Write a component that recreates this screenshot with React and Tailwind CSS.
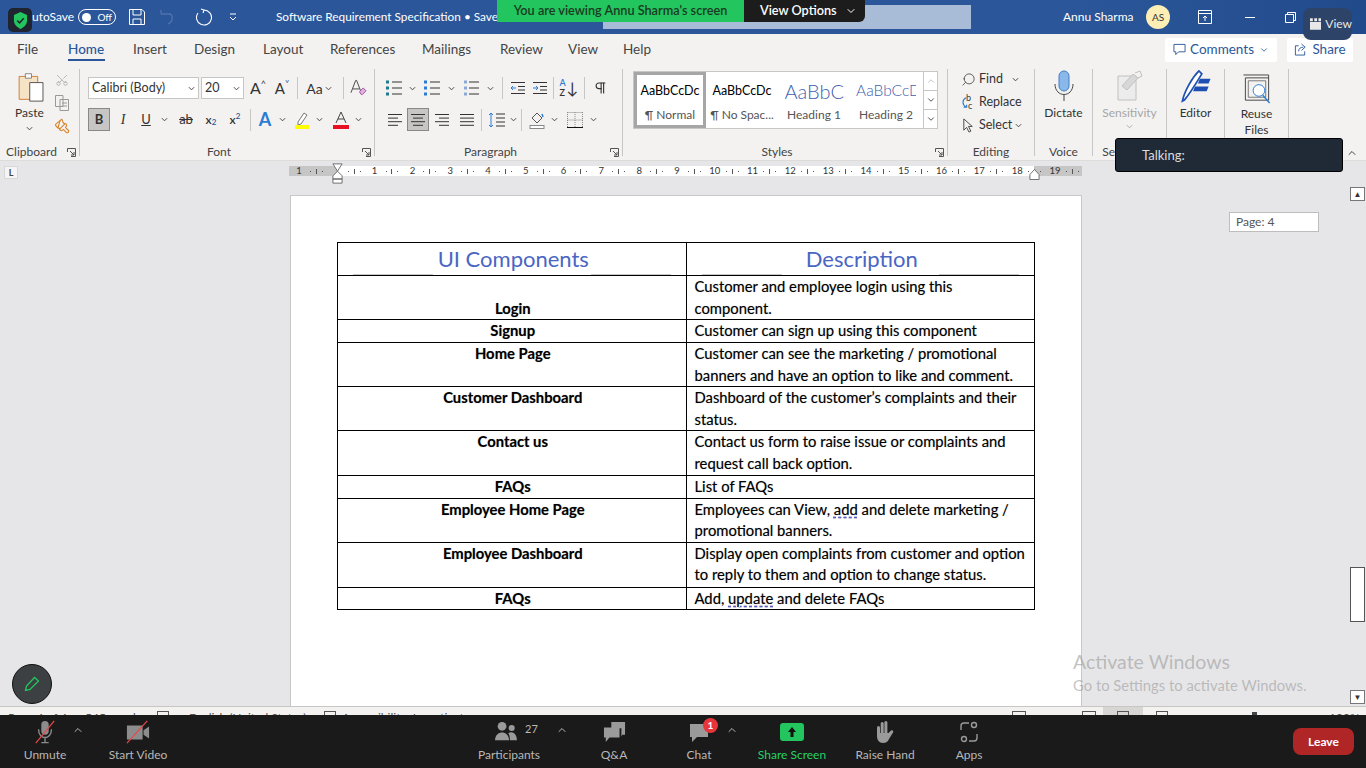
import React from "react";
import { ChevronDown, ChevronUp, Search, Pilcrow, Scissors, Paintbrush } from "lucide-react";

const Caret = ({ className = "" }) => (
  <svg viewBox="0 0 8 5" className={`w-[7px] h-[5px] ${className}`} fill="none" stroke="#444" strokeWidth="1.1">
    <path d="M1 1l3 3 3-3" />
  </svg>
);

const Divider = ({ className = "" }) => <span className={`block w-px h-[22px] bg-[#c8c6c4] ${className}`} />;

const Launcher = () => (
  <svg viewBox="0 0 9 9" className="w-[9px] h-[9px]" fill="none" stroke="#555" strokeWidth="1">
    <path d="M.5 4V.5H8.500V8.500H4M3 3l4 4M7 4v3H4" />
  </svg>
);

const Group = ({ width, label, launcher, children }) => (
  <div className={`flex flex-col shrink-0 h-[87px] border-r border-[#c8c6c4] ${width}`}>
    <div className="flex-1 min-h-0">{children}</div>
    <div className={`relative h-[16px] text-center text-[12px] leading-[24px] text-[#444] whitespace-nowrap ${launcher ? "pr-[16px]" : ""}`}>
      {label}
      {launcher && <span className="absolute right-[3px] top-[8px]"><Launcher /></span>}
    </div>
  </div>
);

const Cell = ({ width, className = "", children }) => (
  <span className={`flex items-center justify-center shrink-0 h-[22px] ${width} ${className}`}>{children}</span>
);

const Lines = ({ rows }) => (
  <svg viewBox="0 0 16 14" className="w-[16px] h-[14px]" stroke="#333" strokeWidth="1" fill="none">
    {rows.map((r, i) => (
      <path key={i} d={`M${r[0]} ${1.5 + i * 3.6}H${r[1]}`} />
    ))}
  </svg>
);

const ListIcon = ({ color = "#1f7a8c", subtle }) => (
  <svg viewBox="0 0 18 16" className="w-[18px] h-[16px]" fill="none">
    {[2, 8, 14].map((y) => (
      <g key={y}>
        <rect x={subtle ? 2 : 1} y={y - 1.500} width="3" height="3" fill={color} />
        <path d={`M7 ${y}H17`} stroke="#333" />
      </g>
    ))}
  </svg>
);

const IndentIcon = ({ flip }) => (
  <svg viewBox="0 0 16 14" className="w-[16px] h-[14px]" fill="none" stroke="#333">
    <path d="M1 1.500H15M8 5.500H15M8 9H15M1 12.500H15" />
    <path d={flip ? "M6 7H1M3 5L1 7l2 2" : "M1 7H6M4 5l2 2-2 2"} stroke="#2b7cd3" />
  </svg>
);

const TAB_ITEMS = [
  ["File", "w-[51px]"],
  ["Home", "w-[65px]"],
  ["Insert", "w-[61px]"],
  ["Design", "w-[69px]"],
  ["Layout", "w-[67px]"],
  ["References", "w-[92px]"],
  ["Mailings", "w-[78px]"],
  ["Review", "w-[68px]"],
  ["View", "w-[55px]"],
  ["Help", "w-[40px]"],
];

const STYLES = [
  ["AaBbCcDc", "¶ Normal", "text-[12.500px] text-black", "w-[72px] border-[3px] border-[#a6a6a6]"],
  ["AaBbCcDc", "¶ No Spac...", "text-[12.500px] text-black", "w-[72px] pt-[3px]"],
  ["AaBbCc", "Heading 1", "w-[59px] overflow-hidden text-[20px] font-light text-[#3f5fae]", "w-[72px] pt-[3px]"],
  ["AaBbCcD", "Heading 2", "w-[60px] overflow-hidden text-[15.500px] font-light text-[#3f5fae]", "w-[72px] pt-[3px]"],
];

const ROWS = [
  ["Login", <>Customer and employee login using this<br />component.</>, "h-[44px]", "align-bottom"],
  ["Signup", "Customer can sign up using this component", "h-[23px]", "align-top"],
  ["Home Page", <>Customer can see the marketing / promotional<br />banners and have an option to like and comment.</>, "h-[44px]", "align-top"],
  ["Customer Dashboard", <>Dashboard of the customer’s complaints and their<br />status.</>, "h-[44px]", "align-top"],
  ["Contact us", <>Contact us form to raise issue or complaints and<br />request call back option.</>, "h-[45px]", "align-top"],
  ["FAQs", "List of FAQs", "h-[22px]", "align-top"],
  ["Employee Home Page", <>Employees can View, <span className="underline decoration-dashed decoration-[#5a5ac8] underline-offset-2">add</span> and delete marketing /<br />promotional banners.</>, "h-[44px]", "align-top"],
  ["Employee Dashboard", <>Display open complaints from customer and option<br />to reply to them and option to change status.</>, "h-[45px]", "align-top"],
  ["FAQs", <>Add, <span className="underline decoration-dashed decoration-[#5a5ac8] underline-offset-2">update</span> and delete FAQs</>, "h-[22px]", "align-top"],
];

const RULER = [-1, 0, 1, 2, 3, 4, 5, 6, 7, 8, 9, 10, 11, 12, 13, 14, 15, 16, 17, 18, 19];

const TitleBar = () => (
  <div className="flex items-center h-[34px] bg-[linear-gradient(90deg,#2b579a_78%,#214a8b_100%)] text-white text-[12px] shrink-0">
    <span className="ml-[32px] w-[46px]">utoSave</span>
    <span className="flex items-center justify-between w-[38px] h-[16px] rounded-full border border-white px-[3px] text-[10px]">
      <span className="w-[9px] h-[9px] rounded-full bg-white" />Off
    </span>
    <svg viewBox="0 0 16 16" className="ml-[13px] w-[16px] h-[16px]" fill="none" stroke="#fff">
      <path d="M.5.500H13L15.500 3V15.500H.5ZM4 .5V6H12V.5M4 15.500V10H12V15.500" />
    </svg>
    <svg viewBox="0 0 18 16" className="ml-[14px] w-[18px] h-[16px]" fill="none" stroke="#4f74ad" strokeWidth="1.300">
      <path d="M2 5H10C14 5 15 12 9 15M2 1v4" />
    </svg>
    <svg viewBox="0 0 18 18" className="ml-[17px] w-[18px] h-[18px]" fill="none" stroke="#fff" strokeWidth="1.100">
      <path d="M10 2A7.500 7.500 0 1 1 4 5M7 1l3 1-1 3" />
    </svg>
    <svg viewBox="0 0 8 8" className="ml-[17px] w-[8px] h-[8px]" fill="none" stroke="#fff">
      <path d="M1 1H7M1 4l3 3 3-3" />
    </svg>
    <span className="ml-[39px] w-[220px] whitespace-nowrap text-[11.800px]">Software Requirement Specification • Saved</span>
    <span className="ml-[107px] w-[368px] h-[24px] bg-[#a8bcd8]" />
    <span className="ml-[92px] w-[72px] whitespace-nowrap">Annu Sharma</span>
    <span className="ml-[11px] flex items-center justify-center w-[24px] h-[24px] rounded-full bg-[#fdeeb5] text-[#333] text-[10px]">AS</span>
    <svg viewBox="0 0 14 14" className="ml-[28px] w-[14px] h-[14px]" fill="none" stroke="#fff">
      <path d="M.5.500H13.500V13.500H.5ZM.5 3.500H13.500M7 11V6M5 8l2-2 2 2" />
    </svg>
    <span className="ml-[33px] w-[10px] h-px bg-white" />
    <svg viewBox="0 0 11 11" className="ml-[30px] w-[11px] h-[11px]" fill="none" stroke="#fff">
      <path d="M.5 2.500H8.500V10.500H.5ZM2.500 2.500V.5H10.500V8.500H8.500" />
    </svg>
  </div>
);

const Tabs = () => (
  <div className="flex items-center h-[33px] pl-[17px] pb-[2px] bg-[#f3f2f1] text-[13.500px] text-[#444] shrink-0">
    {TAB_ITEMS.map(([name, width]) => (
      <span key={name} className={`relative shrink-0 ${width} ${name === "Home" ? "text-[#2b579a] font-medium" : ""}`}>
        {name}
        {name === "Home" && <span className="absolute left-0 top-[20px] w-[37px] h-[2px] bg-[#2b579a]" />}
      </span>
    ))}
    <span className="ml-auto flex items-center w-[112px] h-[24px] bg-white rounded-[2px] text-[13.500px] text-[#2b579a] pl-[8px]">
      <svg viewBox="0 0 14 14" className="w-[13px] h-[13px] mr-[4px]" fill="none" stroke="#2b579a">
        <path d="M1 1.500H13V9.500H6L3 12.500V9.500H1Z" />
      </svg>
      Comments
      <ChevronDown className="ml-[5px] w-[10px] h-[10px]" />
    </span>
    <span className="ml-[10px] mr-[13px] flex items-center justify-center gap-[5px] w-[66px] h-[24px] bg-white rounded-[2px] text-[13.500px] text-[#2b579a]">
      <svg viewBox="0 0 14 14" className="w-[13px] h-[13px]" fill="none" stroke="#2b579a">
        <path d="M5 3H1.500V13H11.500V9M5 9C5 6 7 4.500 10 4.500M8 1l4 3.500L8 8" />
      </svg>
      Share
    </span>
  </div>
);

const Ribbon = () => (
  <div className="flex h-[94px] pt-[2px] bg-[#f3f2f1] border-b border-[#dddcda] text-[#333] shrink-0">
    <Group width="w-[80px]" label="Clipboard" launcher>
      <div className="flex">
        <div className="flex flex-col items-center w-[47px] pl-[12px]">
          <svg viewBox="0 0 30 34" className="mt-[3px] ml-[3px] w-[27px] h-[30px]" fill="none">
            <path d="M1 5H22V31H1Z" fill="#f6e3c5" stroke="#c8742b" />
            <path d="M8 2H15V7H8Z" fill="#fff" stroke="#777" />
            <path d="M13 12H28V33H13Z" fill="#fff" stroke="#444" />
          </svg>
          <span className="text-[12px] leading-[14px] mt-[4px]">Paste</span>
          <Caret className="mt-[6px]" />
        </div>
        <div className="flex flex-col items-center gap-[7px] w-[26px] pt-[3px] pl-[4px]">
          <Scissors className="w-[14px] h-[16px] text-[#a6a6a6] -rotate-90" strokeWidth={1.300} />
          <svg viewBox="0 0 14 16" className="w-[14px] h-[16px]" fill="none" stroke="#999">
            <path d="M.5.500H8V11.500H.5ZM5 4.500H13.500V15.500H5ZM7 8H12M7 11H12" />
          </svg>
          <Paintbrush className="w-[16px] h-[16px] text-[#d9822b] rotate-90" strokeWidth={1.600} />
        </div>
      </div>
    </Group>

    <Group width="w-[295px]" label="Font" launcher>
      <div className="flex items-center h-[22px] mt-[8px] pl-[8px]">
        <span className="flex items-center justify-between w-[111px] h-[22px] bg-white border border-[#c8c6c4] px-[3px] text-[12.500px]">
          Calibri (Body)<Caret />
        </span>
        <span className="ml-[2px] flex items-center justify-between w-[43px] h-[22px] bg-white border border-[#c8c6c4] px-[3px] text-[12.500px]">
          20<Caret />
        </span>
        <Cell width="w-[24px] ml-[2px]" className="text-[16px]">A<sup className="text-[9px]">^</sup></Cell>
        <Cell width="w-[24px]" className="text-[15px]">A<sup className="text-[9px] text-[#2b579a]">˅</sup></Cell>
        <Divider className="ml-[3px]" />
        <Cell width="w-[38px] ml-[2px]" className="gap-[2px] text-[14px]">Aa<Caret /></Cell>
        <Divider className="ml-[5px]" />
        <Cell width="w-[28px]">
          <svg viewBox="0 0 18 18" className="w-[17px] h-[18px]" fill="none">
            <path d="M1 14L6 1h1l5 13M3 10h7" stroke="#444" />
            <path d="M10 13l4-4 3 3-4 4h-1Z" fill="#e2b3e0" stroke="#a24aa0" />
          </svg>
        </Cell>
      </div>
      <div className="flex items-center h-[23px] mt-[9px] pl-[8px]">
        <span className="flex items-center justify-center w-[22px] h-[23px] bg-[#c8c6c4] border border-[#8a8886] text-[13px] font-bold">B</span>
        <Cell width="w-[22px] ml-[2px]" className="italic text-[14px] font-['Liberation_Serif',serif]">I</Cell>
        <Cell width="w-[24px]" className="underline text-[13px]">U</Cell>
        <Cell width="w-[12px]"><Caret /></Cell>
        <Cell width="w-[24px] ml-[4px]" className="line-through text-[13px]">ab</Cell>
        <Cell width="w-[24px] ml-[1px]" className="text-[12px] font-semibold">x<sub className="text-[8px] text-[#2b579a]">2</sub></Cell>
        <Cell width="w-[24px]" className="text-[12px] font-semibold">x<sup className="text-[8px] text-[#2b579a]">2</sup></Cell>
        <Divider className="ml-[3px]" />
        <Cell width="w-[24px] ml-[2px]" className="text-[18px] font-bold text-[#2b7cd3]">A</Cell>
        <Cell width="w-[10px]"><Caret /></Cell>
        <Cell width="w-[24px] ml-[3px]">
          <svg viewBox="0 0 16 18" className="w-[16px] h-[18px]" fill="none">
            <path d="M4 11L10 2l3 2-6 9-3 1Z" stroke="#777" fill="#fff" />
            <rect x="1" y="14" width="14" height="4" fill="#ffff00" />
          </svg>
        </Cell>
        <Cell width="w-[10px]"><Caret /></Cell>
        <Cell width="w-[24px] ml-[5px]">
          <svg viewBox="0 0 16 18" className="w-[16px] h-[18px]" fill="none">
            <path d="M3 12L8 1l5 11M5 8h6" stroke="#444" />
            <rect y="14" width="16" height="4" fill="#e81123" />
          </svg>
        </Cell>
        <Cell width="w-[10px]"><Caret /></Cell>
      </div>
    </Group>

    <Group width="w-[248px]" label="Paragraph" launcher>
      <div className="flex items-center h-[22px] mt-[8px] pl-[10px]">
        <Cell width="w-[18px]"><ListIcon /></Cell>
        <Cell width="w-[18px]"><Caret /></Cell>
        <Cell width="w-[22px]"><ListIcon color="#2b7cd3" /></Cell>
        <Cell width="w-[16px]"><Caret /></Cell>
        <Cell width="w-[24px]"><ListIcon color="#8aa9d6" subtle /></Cell>
        <Cell width="w-[14px]"><Caret /></Cell>
        <Divider className="ml-[5px]" />
        <Cell width="w-[26px] ml-[2px]"><IndentIcon flip /></Cell>
        <Cell width="w-[18px]"><IndentIcon /></Cell>
        <Divider className="ml-[4px]" />
        <Cell width="w-[30px]">
          <span className="flex flex-col text-[9px] leading-[10px] font-semibold"><span className="text-[#2b7cd3]">A</span><span>Z</span></span>
          <span className="text-[16px] ml-[1px]">↓</span>
        </Cell>
        <Divider />
        <Cell width="w-[30px]"><Pilcrow className="w-[15px] h-[16px]" strokeWidth={1.800} /></Cell>
      </div>
      <div className="flex items-center h-[23px] mt-[9px] pl-[8px]">
        <Cell width="w-[24px]"><Lines rows={[[1, 15], [1, 11], [1, 15], [1, 11]]} /></Cell>
        <span className="flex items-center justify-center w-[22px] h-[23px] bg-[#c8c6c4] border border-[#8a8886]"><Lines rows={[[1, 15], [3, 13], [1, 15], [3, 13]]} /></span>
        <Cell width="w-[26px]"><Lines rows={[[1, 15], [5, 15], [1, 15], [5, 15]]} /></Cell>
        <Cell width="w-[24px]"><Lines rows={[[1, 15], [1, 15], [1, 15], [1, 15]]} /></Cell>
        <Divider className="ml-[2px]" />
        <Cell width="w-[22px] ml-[4px]">
          <svg viewBox="0 0 18 16" className="w-[18px] h-[16px]" fill="none">
            <path d="M3 1V15M1 3l2-2 2 2M1 13l2 2 2-2" stroke="#2b7cd3" />
            <path d="M8 2H17M8 6H17M8 10H17M8 14H17" stroke="#333" />
          </svg>
        </Cell>
        <Cell width="w-[10px]"><Caret /></Cell>
        <Divider className="ml-[3px]" />
        <Cell width="w-[24px] ml-[3px]">
          <svg viewBox="0 0 16 18" className="w-[16px] h-[18px]" fill="none">
            <path d="M3 7l5-5 5 5-5 5Z" stroke="#555" />
            <path d="M13 3l1 3" stroke="#2b7cd3" strokeWidth="1.500" />
            <rect x="1" y="14.500" width="14" height="3" fill="#fff" stroke="#888" />
          </svg>
        </Cell>
        <Cell width="w-[10px]"><Caret /></Cell>
        <Cell width="w-[24px] ml-[4px]">
          <svg viewBox="0 0 16 16" className="w-[16px] h-[16px]" fill="none" stroke="#888" strokeDasharray="1 1">
            <path d="M.5.500H15.500M.5 8H15.500M8 0V16M.5 0V16M15.500 0V16" />
            <path d="M0 15.500H16" stroke="#111" strokeDasharray="none" />
          </svg>
        </Cell>
        <Cell width="w-[12px]"><Caret /></Cell>
      </div>
    </Group>

    <Group width="w-[325px]" label="Styles" launcher>
      <div className="flex ml-[10px] mt-[2px] w-[305px] h-[58px] bg-white border border-[#c8c6c4]">
        {STYLES.map(([sample, name, look, box]) => (
          <div key={name} className={`flex flex-col items-center shrink-0 overflow-hidden ${box}`}>
            <span className={`flex items-center h-[32px] whitespace-nowrap ${look}`}>{sample}</span>
            <span className="text-[12px] leading-[16px] text-[#555] whitespace-nowrap">{name}</span>
          </div>
        ))}
        <div className="flex flex-col ml-auto w-[14px] border-l border-[#c8c6c4]">
          <span className="flex flex-1 items-center justify-center"><ChevronUp className="w-[10px] h-[10px] text-[#bbb]" /></span>
          <span className="flex flex-1 items-center justify-center border-y border-[#c8c6c4]"><ChevronDown className="w-[10px] h-[10px] text-[#333]" /></span>
          <span className="flex flex-1 items-center justify-center"><ChevronDown className="w-[10px] h-[10px] text-[#333]" /></span>
        </div>
      </div>
    </Group>

    <Group width="w-[87px]" label="Editing">
      <div className="flex flex-col gap-[7px] pl-[13px] pt-[2px] text-[12.500px] leading-[16px]">
        <span className="flex items-center gap-[3px]"><Search className="w-[15px] h-[15px] -scale-x-100" strokeWidth={1.200} />Find<Caret className="ml-[6px]" /></span>
        <span className="flex items-center gap-[3px]">
          <span className="relative block w-[15px] h-[16px] text-[9px] leading-[8px] text-[#333]">
            <span className="absolute left-[5px] top-0">b</span>
            <span className="absolute left-[7px] top-[8px]">c</span>
            <svg viewBox="0 0 8 14" className="absolute left-0 top-[3px] w-[7px] h-[12px]" fill="none" stroke="#2b7cd3" strokeWidth="1.300">
              <path d="M6 1C1 3 1 9 6 12M3 12H6.500V9" />
            </svg>
          </span>
          Replace
        </span>
        <span className="flex items-center gap-[3px]">
          <svg viewBox="0 0 14 16" className="w-[15px] h-[15px]" fill="none" stroke="#444"><path d="M2 1V13L5 10l2.500 5 2-1L7 9h4Z" /></svg>
          Select<Caret />
        </span>
      </div>
    </Group>

    <Group width="w-[58px]" label="Voice">
      <div className="flex flex-col items-center pt-[1px]">
        <svg viewBox="0 0 22 32" className="w-[22px] h-[32px]" fill="none">
          <rect x="6" y="1" width="10" height="20" rx="5" fill="#8ab8ea" stroke="#3f7fc4" />
          <path d="M2 14C2 28 20 28 20 14M11 25V31" stroke="#444" />
        </svg>
        <span className="text-[12px] leading-[14px] mt-[4px]">Dictate</span>
      </div>
    </Group>

    <Group width="w-[74px]" label="Sensitivity">
      <div className="flex flex-col items-center pt-[1px] text-[#a6a6a6]">
        <svg viewBox="0 0 26 32" className="w-[26px] h-[32px]" fill="none" stroke="#c0c0c0">
          <path d="M1 6H19V30H1Z" fill="#ececec" />
          <path d="M5 16L16 4l5 4-11 12Z" fill="#d8d8d8" />
          <path d="M18 3l5-2 2 5-4 2" />
        </svg>
        <span className="text-[12px] leading-[14px] mt-[4px]">Sensitivity</span>
        <Caret className="mt-[4px] opacity-40" />
      </div>
    </Group>

    <Group width="w-[58px]" label="">
      <div className="flex flex-col items-center pt-[1px]">
        <svg viewBox="0 0 32 34" className="w-[32px] h-[33px]" fill="none">
          <path d="M2 32C4 22 12 8 19 1l3 3C16 14 10 24 4 31Z" fill="#fff" stroke="#1e50b3" strokeWidth="1.800" />
          <path d="M20 9H31L29 14H18ZM15 17H29L27 22H13Z" fill="#1e50b3" />
        </svg>
        <span className="text-[12px] leading-[14px] mt-[3px]">Editor</span>
      </div>
    </Group>

    <Group width="w-[64px]" label="">
      <div className="flex flex-col items-center pt-[5px]">
        <svg viewBox="0 0 30 32" className="w-[30px] h-[31px]" fill="none">
          <path d="M1 1H27V4M3 4H27V27H3Z" stroke="#444" />
          <path d="M6 7H24V24H6Z" stroke="#777" />
          <circle cx="17" cy="17" r="6" stroke="#2b7cd3" fill="#fff" />
          <path d="M21 22l7 8" stroke="#2b7cd3" strokeWidth="1.500" />
        </svg>
        <span className="text-[12px] leading-[16px] mt-[1px]">Reuse</span>
        <span className="text-[12px] leading-[16px]">Files</span>
      </div>
    </Group>

    <div className="flex flex-1 items-end justify-end pr-[8px] pb-[1px]">
      <ChevronUp className="w-[12px] h-[12px] text-[#444]" />
    </div>
  </div>
);

const Ruler = () => (
  <div className="relative flex items-start h-[24px] pt-[5px] bg-[#e6e6e8] shrink-0">
    <span className="ml-[4px] flex items-end justify-center w-[14px] h-[13px] bg-[#f5f5f5] border border-[#d8d8d8] text-[#444] text-[9px] leading-[10px] font-bold">L</span>
    <div className="ml-[271px] flex w-[793px] h-[10px] pl-[4px] overflow-hidden items-center text-[9.500px] text-[#333] bg-[linear-gradient(90deg,#c6c6c6_48px,#fff_48px,#fff_745px,#c6c6c6_745px)]">
      {RULER.map((n) => (
        <span key={n} className="flex items-center justify-between shrink-0 w-[37.800px] pr-[8px]">
          <span className="w-[12px] text-center">{n === 0 ? "" : Math.abs(n)}</span>
          <span className="w-px h-px bg-[#555]" />
          <span className="w-px h-[5px] bg-[#555]" />
          <span className="w-px h-px bg-[#555]" />
        </span>
      ))}
    </div>
    {/* indent markers */}
    <svg viewBox="0 0 12 22" className="absolute left-[332px] top-[2px] w-[11px] h-[21px]" fill="#fff" stroke="#666">
      <path d="M1 .5H11L6 8.500ZM6 8.500L11 13.500V17H1V13.500ZM1 17H11V21.500H1Z" />
    </svg>
    <svg viewBox="0 0 12 12" className="absolute left-[1029px] top-[8px] w-[11px] h-[11px]" fill="#fff" stroke="#666">
      <path d="M6 .5L11 6V11.500H1V6Z" />
    </svg>
  </div>
);

const DocTable = () => (
  <table className="ml-[46px] mt-[46px] w-[698px] table-fixed border-collapse border border-black text-[14.800px] leading-[21.500px] text-black">
    <thead>
      <tr className="h-[33px]">
        {["UI Components", "Description"].map((h) => (
          <th key={h} className="relative border border-black pl-[3px] text-[22px] leading-[30px] font-normal text-[#4a66c4]">
            {h}
            <span className="absolute left-[15px] bottom-0 w-[80px] h-px bg-[#c8c8c8]" />
            <span className="absolute right-[15px] bottom-0 w-[80px] h-px bg-[#c8c8c8]" />
          </th>
        ))}
      </tr>
    </thead>
    <tbody className="[text-shadow:0_0_1px_rgba(0,0,0,0.35)]">
      {ROWS.map(([name, text, height, align], i) => (
        <tr key={i} className={height}>
          <td className={`border border-black pl-[2px] text-center font-bold ${align}`}>{name}</td>
          <td className="border border-black pl-[8px] align-top whitespace-nowrap">{text}</td>
        </tr>
      ))}
    </tbody>
  </table>
);

const DocArea = () => (
  <div className="flex flex-1 min-h-0 bg-[#e6e6e8] overflow-hidden">
    <div className="ml-[290px] mt-[10px] w-[792px] h-[700px] bg-white border border-[#c8c8c8] shrink-0">
      <DocTable />
    </div>
    <div className="ml-auto mr-px flex flex-col items-center w-[15px] pt-[2px] pb-[2px]">
      <span className="flex items-center justify-center w-[15px] h-[14px] bg-white border border-[#777] text-[8px] leading-none text-[#333]">▲</span>
      <span className="mt-[366px] w-[15px] h-[55px] bg-white border border-[#555]" />
      <span className="mt-auto flex items-center justify-center w-[15px] h-[14px] bg-white border border-[#777] text-[8px] leading-none text-[#333]">▼</span>
    </div>
  </div>
);

const StatusBar = () => (
  <div className="flex items-start h-[9px] overflow-hidden bg-[#f3f2f1] border-t border-[#c8c6c4] pl-[8px] text-[12px] leading-[14px] text-[#555] whitespace-nowrap shrink-0">
    <span className="mt-[4px] w-[77px]">Page 4 of 4</span>
    <span className="mt-[4px] w-[72px]">545 words</span>
    <span className="mt-[4px] w-[12px] h-[12px] border border-[#555]" />
    <span className="mt-[4px] ml-[20px] w-[135px]">English (United States)</span>
    <span className="mt-[4px] w-[12px] h-[12px] border border-[#555]" />
    <span className="mt-[4px] ml-[6px] w-[150px]">Accessibility: Investigate</span>
    <span className="mt-[4px] ml-[520px] w-[14px] h-[12px] border border-[#555]" />
    <span className="mt-[4px] ml-[56px] w-[14px] h-[12px] border border-[#555]" />
    <span className="flex justify-center pt-[4px] ml-[7px] w-[40px] h-[8px] bg-[#d8d6d4]">
      <span className="w-[12px] h-[12px] border border-[#555]" />
    </span>
    <span className="mt-[4px] ml-[13px] w-[12px] h-[12px] border border-[#555]" />
    <span className="mt-[5px] ml-[84px] w-[5px] h-[10px] bg-[#444]" />
    <span className="mt-[4px] ml-[72px]">100%</span>
  </div>
);

const ToolItem = ({ width, label, color = "text-[#b8b8b8]", children }) => (
  <div className={`relative flex flex-col items-center shrink-0 ${width}`}>
    <div className="flex items-center justify-center h-[31px] mt-px">{children}</div>
    <span className={`text-[12px] leading-[16px] whitespace-nowrap ${color}`}>{label}</span>
  </div>
);

const UpCaret = ({ className }) => (
  <ChevronUp className={`absolute top-[9px] w-[12px] h-[12px] text-[#b8b8b8] ${className}`} />
);

const Toolbar = () => (
  <div className="flex items-start h-[53px] bg-[#1a1a1a] shrink-0">
    <ToolItem width="w-[90px]" label="Unmute">
      <svg viewBox="0 0 24 26" className="w-[24px] h-[24px]" fill="none">
        <rect x="8" y="1" width="8" height="15" rx="4" fill="#8c8c8c" />
        <path d="M5 10C5 22 19 22 19 10M12 19V24M8 24.500H16" stroke="#8c8c8c" strokeWidth="1.500" />
        <path d="M2 25L22 1" stroke="#e8484a" strokeWidth="1.300" />
      </svg>
      <UpCaret className="left-[72px]" />
    </ToolItem>
    <ToolItem width="w-[90px] ml-[3px]" label="Start Video">
      <svg viewBox="0 0 26 26" className="w-[26px] h-[24px]" fill="none">
        <path d="M1 6H18V21H1ZM19 11L25 7V20L19 16Z" fill="#8c8c8c" />
        <path d="M1 25L23 1" stroke="#e8484a" strokeWidth="1.300" />
      </svg>
    </ToolItem>
    <ToolItem width="w-[78px] ml-[287px]" label="Participants">
      <svg viewBox="0 0 25 24" className="w-[24px] h-[21px] -ml-[6px]" fill="#9a9a9a">
        <circle cx="8" cy="6" r="5" />
        <circle cx="19" cy="8" r="3.500" />
        <path d="M0 22C0 10 16 10 16 22ZM17 22C17 17 16 15 15 14C20 11 25 15 25 22Z" />
      </svg>
      <span className="absolute left-[55px] top-[6px] text-[11px] text-[#b8b8b8]">27</span>
      <UpCaret className="left-[86px]" />
    </ToolItem>
    <ToolItem width="w-[56px] ml-[38px]" label="Q&A">
      <svg viewBox="0 0 25 24" className="w-[25px] h-[22px]" fill="#9a9a9a">
        <path d="M9 1H24V15H21L20 17V8H9Z" />
        <path d="M1 7H18V18H7L3 23V18H1Z" />
      </svg>
    </ToolItem>
    <ToolItem width="w-[56px] ml-[29px]" label="Chat">
      <svg viewBox="0 0 22 22" className="w-[22px] h-[22px]" fill="#9a9a9a">
        <path d="M2 3H20V16H9L4 21V16H2Z" />
      </svg>
      <span className="absolute left-[32px] top-[3px] flex items-center justify-center w-[15px] h-[15px] rounded-full bg-[#e8353a] text-white text-[10px] font-bold">1</span>
      <UpCaret className="left-[55px]" />
    </ToolItem>
    <ToolItem width="w-[84px] ml-[23px]" label="Share Screen" color="text-[#25d366]">
      <span className="flex items-center justify-center w-[24px] h-[18px] rounded-[3px] bg-[#22c55e]">
        <svg viewBox="0 0 10 10" className="w-[10px] h-[10px]" fill="#111"><path d="M5 0L9 5H6.500V10H3.500V5H1Z" /></svg>
      </span>
    </ToolItem>
    <ToolItem width="w-[74px] ml-[14px]" label="Raise Hand">
      <svg viewBox="0 0 18 22" className="w-[18px] h-[22px]" fill="#9a9a9a">
        <rect x="1" y="5" width="3" height="11" rx="1.500" />
        <rect x="4.700" y="1" width="3" height="13" rx="1.500" />
        <rect x="8.400" y="0" width="3" height="14" rx="1.500" />
        <path d="M1 12H12.500L15 9.500C16.500 8.500 18 10 17 11.500L13 18C12 20.500 10 22 7 22C3 22 1 19 1 15Z" />
      </svg>
    </ToolItem>
    <ToolItem width="w-[48px] ml-[23px]" label="Apps">
      <svg viewBox="0 0 18 24" className="w-[18px] h-[24px]" fill="none" stroke="#9a9a9a" strokeWidth="1.400">
        <path d="M1 10V6Q1 3 4 3H9M17 14V18Q17 21 14 21H9" />
        <circle cx="14" cy="5" r="2.500" />
        <circle cx="4" cy="19" r="2.500" />
      </svg>
    </ToolItem>
    <span className="ml-[300px] mt-[13px] flex items-center justify-center w-[61px] h-[27px] rounded-[8px] bg-[#b02525] text-white text-[12px] font-bold">Leave</span>
  </div>
);

export default function App() {
  return (
    <div className="relative flex flex-col w-[1366px] h-[768px] overflow-hidden font-['Lato',sans-serif]">
      <TitleBar />
      <Tabs />
      <Ribbon />
      <Ruler />
      <DocArea />
      <StatusBar />
      <Toolbar />

      {/* zoom's own overlays on top of the shared screen */}
      <div className="absolute left-[497px] top-0 flex h-[22px] text-[12.700px] font-semibold">
        <span className="flex items-center justify-center w-[247px] bg-[#22c55e] text-[#1a3a22]">You are viewing Annu Sharma's screen</span>
        <span className="flex items-center justify-between w-[121px] pl-[16px] pr-[8px] bg-[#1c1c1c] text-white rounded-br-[6px]">
          View Options<ChevronDown className="w-[12px] h-[12px]" />
        </span>
      </div>

      <div className="absolute left-[8px] top-[8px] flex items-center justify-center w-[24px] h-[24px] rounded-[5px] bg-[#1f2430]">
        <svg viewBox="0 0 16 18" className="w-[15px] h-[17px]">
          <path d="M8 0L15 3V9C15 13 12 16 8 18C4 16 1 13 1 9V3Z" fill="#22c55e" />
          <path d="M4.500 9L7 11.500L11.500 6.500" fill="none" stroke="#1f2430" strokeWidth="1.600" />
        </svg>
      </div>

      <div className="absolute left-[1303px] top-[8px] flex items-center gap-[4px] w-[49px] h-[32px] pl-[7px] rounded-[8px] bg-[#2d4468] text-[#e8e8e8] text-[12px]">
        <svg viewBox="0 0 12 12" className="w-[12px] h-[12px]" fill="#e8e8e8">
          <path d="M0 4H12V12H0ZM0 0H3V3H0ZM4.500 0H7.500V3H4.500ZM9 0H12V3H9Z" />
        </svg>
        View
      </div>

      <div className="absolute left-[1115px] top-[138px] flex items-center w-[228px] h-[34px] pl-[26px] pt-[2px] rounded-[3px] bg-[#202a36] border border-black text-[13px] text-[#dcdcdc]">
        Talking:
      </div>

      <div className="absolute left-[1229px] top-[212px] flex items-center w-[90px] h-[20px] pl-[6px] bg-white border border-[#bdbdbd] text-[12px] text-[#555]">
        Page: 4
      </div>

      <div className="absolute left-[12px] top-[664px] flex items-center justify-center w-[40px] h-[40px] rounded-full bg-[#3c4042] border border-[#111]">
        <svg viewBox="0 0 16 16" className="w-[16px] h-[16px]" fill="none" stroke="#22c55e" strokeWidth="1.300">
          <path d="M1.500 14.500L2.500 10L10.500 1.500L14.500 5L6 13.500Z" />
        </svg>
      </div>

      <div className="absolute left-[1073px] top-[650px] text-[#9b9b9b]/60">
        <div className="text-[19.500px] leading-[24px]">Activate Windows</div>
        <div className="text-[14.800px] leading-[20px] mt-[1px]">Go to Settings to activate Windows.</div>
      </div>
    </div>
  );
}
